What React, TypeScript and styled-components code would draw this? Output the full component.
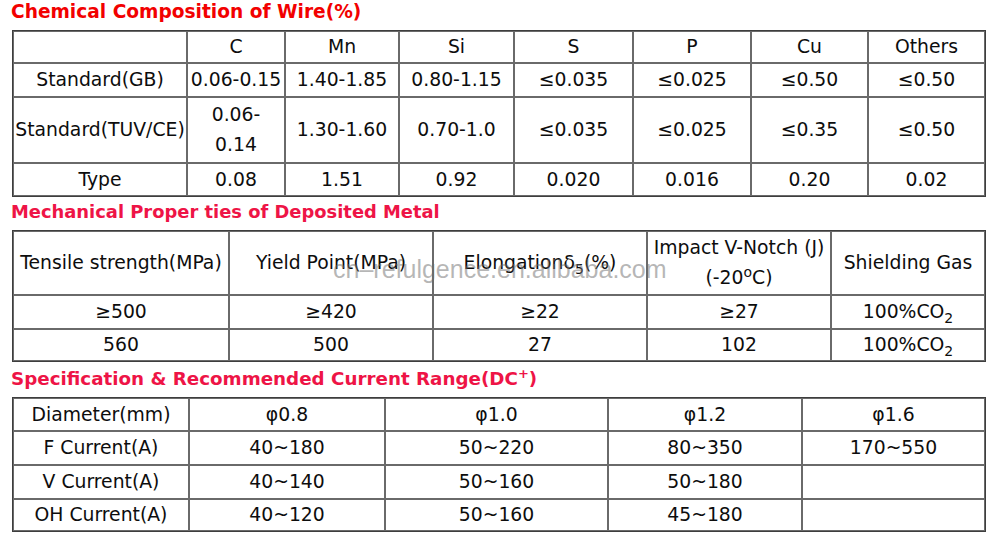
import styled, { createGlobalStyle } from 'styled-components'

const GlobalStyle = createGlobalStyle`
  html, body {
    margin: 0;
    padding: 0;
    background: #ffffff;
  }
  body {
    font-family: "DejaVu Sans", Verdana, sans-serif;
    color: #111;
  }
`

type Row = { cells: React.ReactNode[]; height: number }

const chemCols = [174, 98, 114, 115, 119, 118, 117, 117]
const chemRows: Row[] = [
  { cells: ['', 'C', 'Mn', 'Si', 'S', 'P', 'Cu', 'Others'], height: 32 },
  {
    cells: ['Standard(GB)', '0.06-0.15', '1.40-1.85', '0.80-1.15', '≤0.035', '≤0.025', '≤0.50', '≤0.50'],
    height: 34,
  },
  {
    cells: [
      'Standard(TUV/CE)',
      <>0.06-<br />0.14</>,
      '1.30-1.60',
      '0.70-1.0',
      '≤0.035',
      '≤0.025',
      '≤0.35',
      '≤0.50',
    ],
    height: 66,
  },
  { cells: ['Type', '0.08', '1.51', '0.92', '0.020', '0.016', '0.20', '0.02'], height: 33 },
]

const mechCols = [216, 204, 214, 184, 154]
const mechRows: Row[] = [
  {
    cells: [
      'Tensile strength(MPa)',
      'Yield Point(MPa)',
      <>Elongationδ<sub>5</sub>(%)</>,
      <>Impact V-Notch (J)<br />(-20<sup>o</sup>C)</>,
      'Shielding Gas',
    ],
    height: 64,
  },
  { cells: ['≥500', '≥420', '≥22', '≥27', <>100%CO<sub>2</sub></>], height: 34 },
  { cells: ['560', '500', '27', '102', <>100%CO<sub>2</sub></>], height: 32 },
]

const specCols = [176, 196, 223, 194, 183]
const specRows: Row[] = [
  { cells: ['Diameter(mm)', 'φ0.8', 'φ1.0', 'φ1.2', 'φ1.6'], height: 33 },
  { cells: ['F Current(A)', '40~180', '50~220', '80~350', '170~550'], height: 34 },
  { cells: ['V Current(A)', '40~140', '50~160', '50~180', ''], height: 34 },
  { cells: ['OH Current(A)', '40~120', '50~160', '45~180', ''], height: 32 },
]

function DataTable({ cols, rows }: { cols: number[]; rows: Row[] }) {
  return (
    <Table>
      <colgroup>
        {cols.map((w, i) => (
          <col key={i} style={{ width: w }} />
        ))}
      </colgroup>
      <tbody>
        {rows.map((row, r) => (
          <tr key={r}>
            {row.cells.map((c, i) => (
              <Cell key={i} $h={row.height}>
                {c}
              </Cell>
            ))}
          </tr>
        ))}
      </tbody>
    </Table>
  )
}

function App() {
  return (
    <>
      <GlobalStyle />
      <Page>
        <Title $color="#f20000" $top={0} $size={18.6}>
          Chemical Composition of Wire(%)
        </Title>
        <DataTable cols={chemCols} rows={chemRows} />

        <Title $color="#ee1446" $top={3} $size={17.9}>
          Mechanical Proper ties of Deposited Metal
        </Title>
        <DataTable cols={mechCols} rows={mechRows} />

        <Title $color="#ee1446" $top={5} $size={18.3}>
          Specification &amp; Recommended Current Range(DC<sup>+</sup>)
        </Title>
        <DataTable cols={specCols} rows={specRows} />

        <Watermark>cn–refulgence.en.alibaba.com</Watermark>
      </Page>
    </>
  )
}

export default App

const Page = styled.div`
  position: relative;
  width: 1000px;
  height: 541px;
  overflow: hidden;
  padding-left: 12px;
  box-sizing: border-box;
`

const Title = styled.div<{ $color: string; $top: number; $size: number }>`
  color: ${(p) => p.$color};
  font-family: "DejaVu Sans", Verdana, sans-serif;
  font-weight: bold;
  font-size: ${(p) => p.$size}px;
  line-height: 24px;
  height: 24px;
  padding-top: ${(p) => p.$top}px;
  margin-left: -1px;
  margin-bottom: 6px;
  white-space: nowrap;

  & sup {
    font-size: 13px;
    line-height: 0;
    vertical-align: 7px;
  }
`

const Table = styled.table`
  width: 974px;
  table-layout: fixed;
  border-collapse: separate;
  border-spacing: 0;
  border: 1px solid #3e3e3e;
`

const Cell = styled.td<{ $h: number }>`
  height: ${(p) => p.$h}px;
  box-sizing: border-box;
  padding: 0;
  border: 1px solid #6a6a6a;
  text-align: center;
  vertical-align: middle;
  font-size: 18.8px;
  line-height: 30px;
  color: #0d0d0d;
  white-space: nowrap;
  overflow: visible;

  & sub {
    font-size: 14px;
    line-height: 0;
    vertical-align: -5px;
  }

  & sup {
    font-size: 14px;
    line-height: 0;
    vertical-align: 7px;
  }
`

const Watermark = styled.div`
  position: absolute;
  left: 333px;
  top: 257px;
  font-family: "Liberation Sans", Arial, sans-serif;
  font-size: 25px;
  line-height: 25px;
  color: rgba(110, 110, 110, 0.5);
  white-space: nowrap;
  pointer-events: none;
`
